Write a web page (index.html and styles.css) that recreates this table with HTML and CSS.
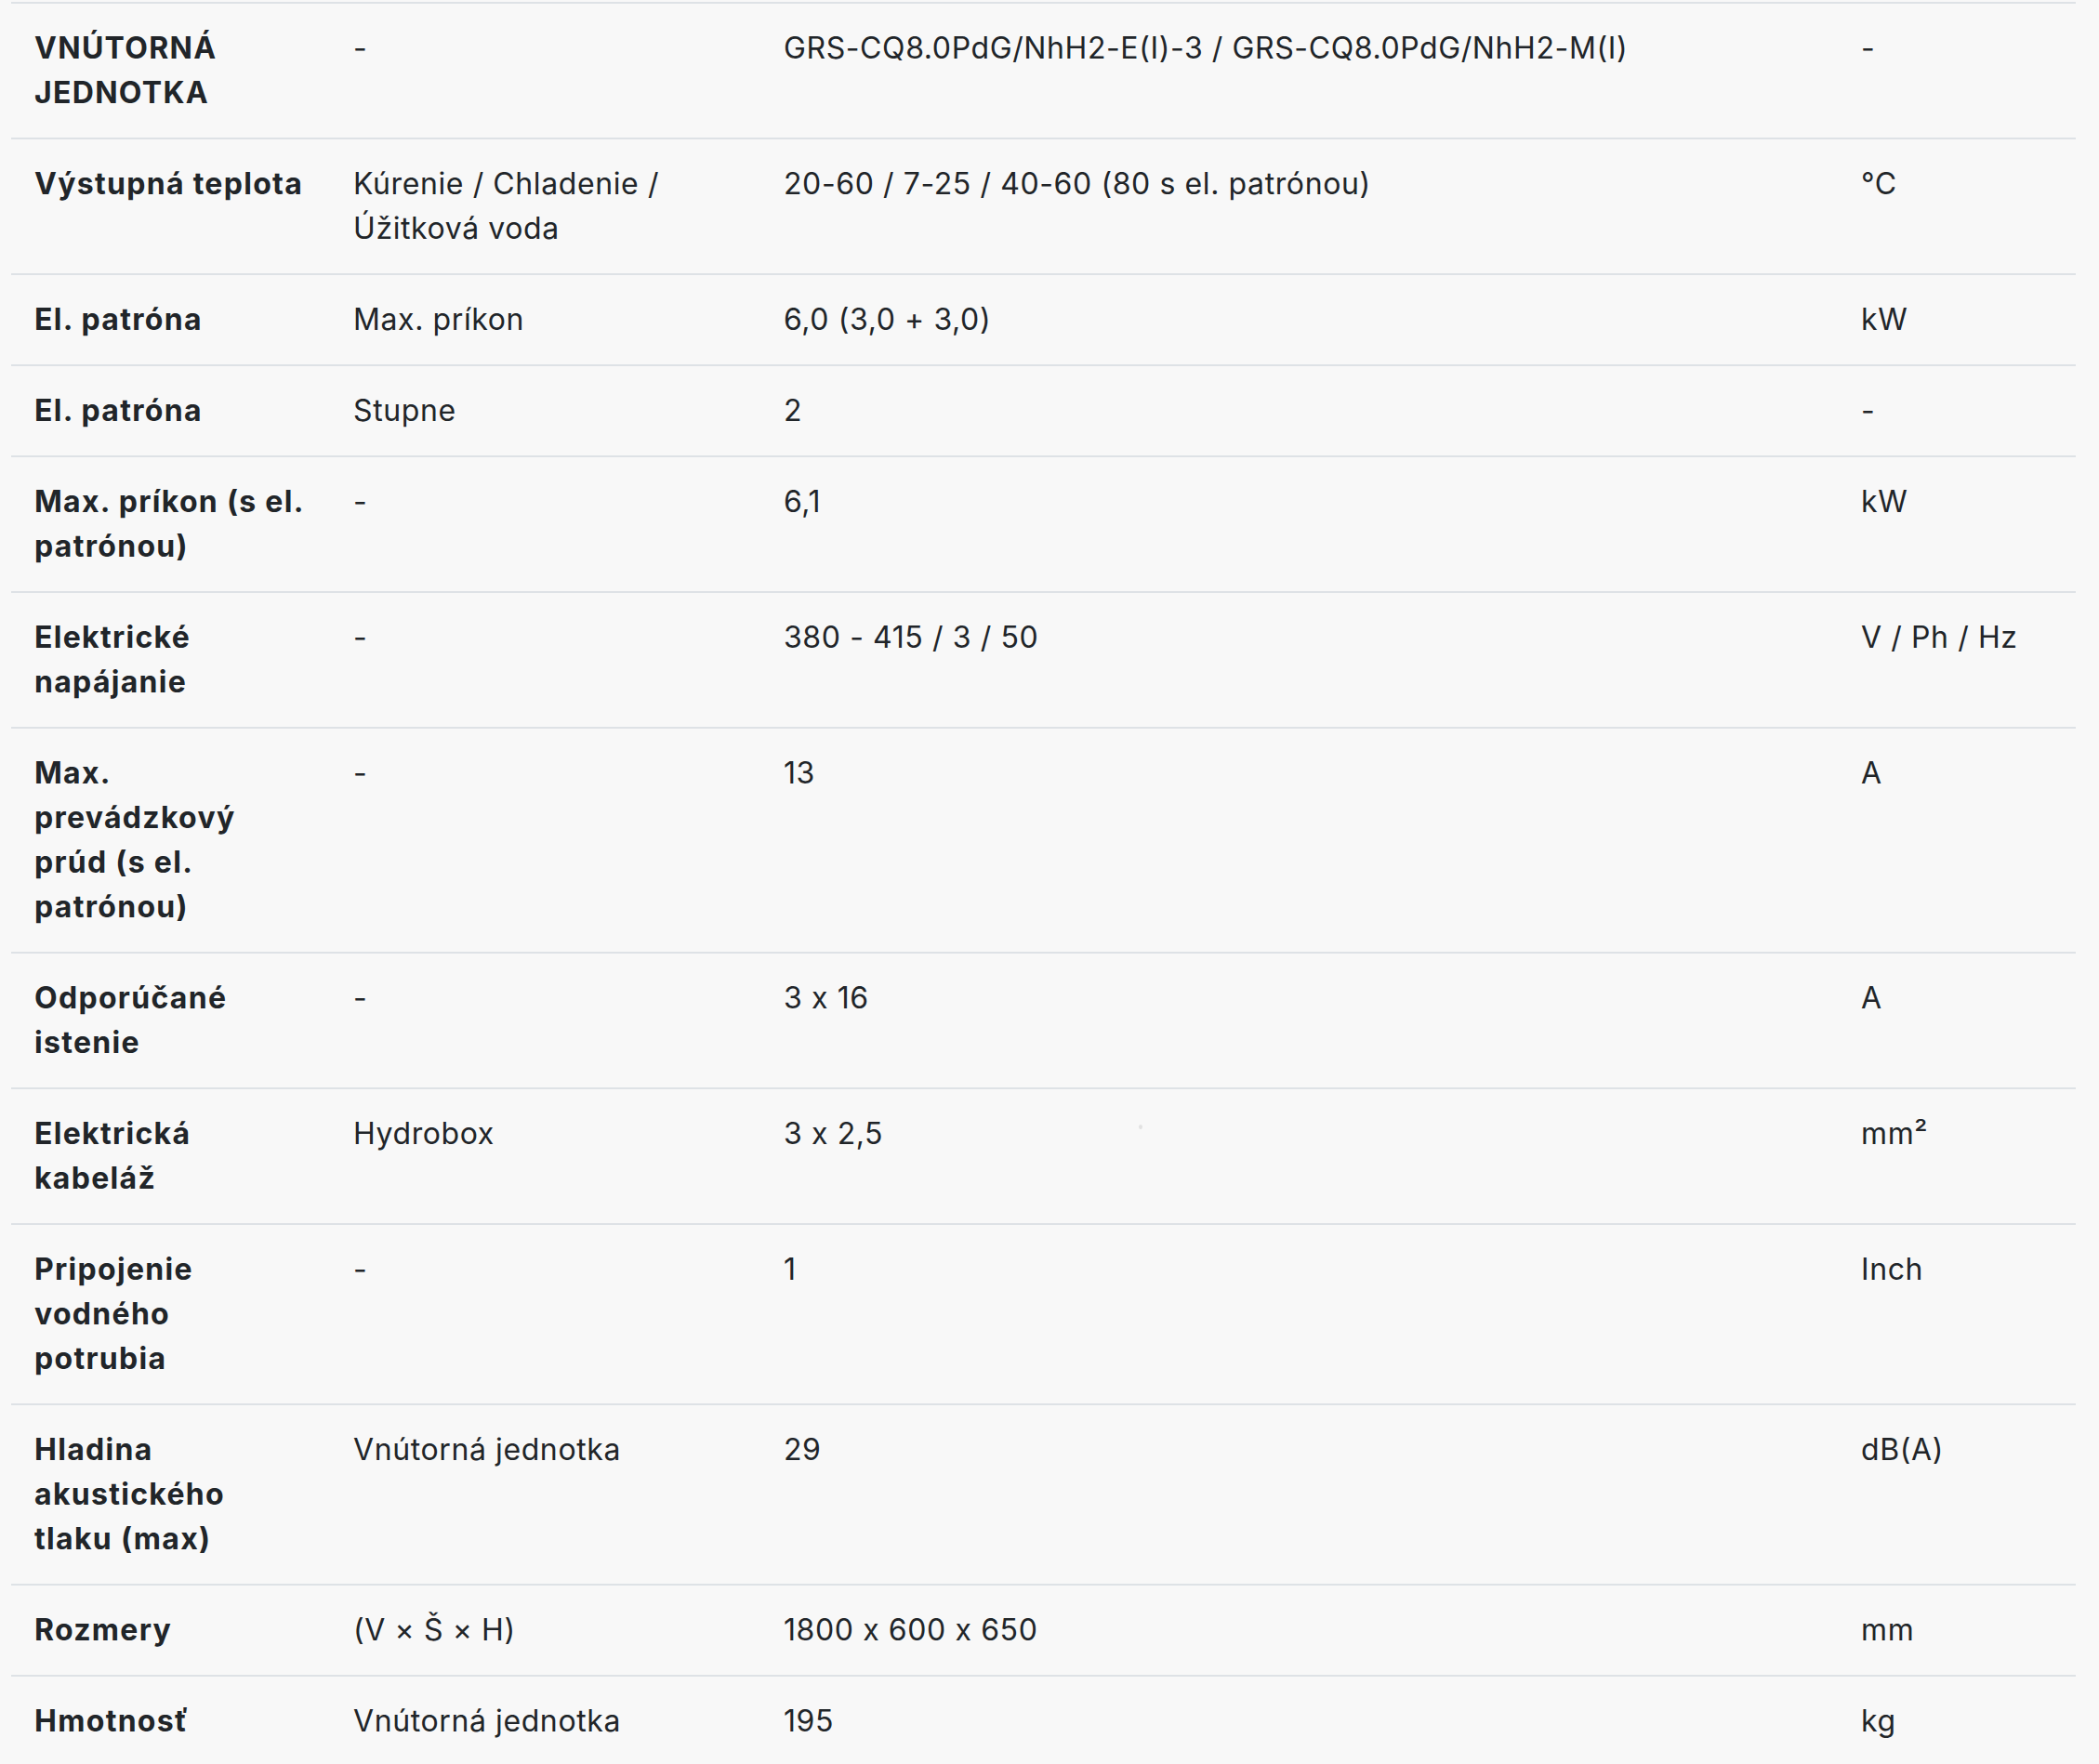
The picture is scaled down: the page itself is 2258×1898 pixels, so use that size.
FILE: index.html
```html
<!DOCTYPE html>
<html lang="sk">
<head>
<meta charset="utf-8">
<title>Technické parametre</title>
<link rel="stylesheet" href="styles.css">
</head>
<body>
<div class="wrap">
<table class="spec">
<colgroup>
<col class="c1"><col class="c2"><col class="c3"><col class="c4">
</colgroup>
<tbody>
<tr><th>VNÚTORNÁ JEDNOTKA</th><td>-</td><td>GRS-CQ8.0PdG/NhH2-E(I)-3 / GRS-CQ8.0PdG/NhH2-M(I)</td><td>-</td></tr>
<tr><th>Výstupná teplota</th><td>Kúrenie / Chladenie / Úžitková voda</td><td>20-60 / 7-25 / 40-60 (80 s el. patrónou)</td><td>°C</td></tr>
<tr><th>El. patróna</th><td>Max. príkon</td><td>6,0 (3,0 + 3,0)</td><td>kW</td></tr>
<tr><th>El. patróna</th><td>Stupne</td><td>2</td><td>-</td></tr>
<tr><th>Max. príkon (s el. patrónou)</th><td>-</td><td>6,1</td><td>kW</td></tr>
<tr><th>Elektrické napájanie</th><td>-</td><td>380 - 415 / 3 / 50</td><td>V / Ph / Hz</td></tr>
<tr><th>Max. prevádzkový prúd (s el. patrónou)</th><td>-</td><td>13</td><td>A</td></tr>
<tr><th>Odporúčané istenie</th><td>-</td><td>3 x 16</td><td>A</td></tr>
<tr><th>Elektrická kabeláž</th><td>Hydrobox</td><td class="dotcell">3 x 2,5<span class="dot"></span></td><td>mm²</td></tr>
<tr><th>Pripojenie vodného potrubia</th><td>-</td><td>1</td><td>Inch</td></tr>
<tr><th>Hladina akustického tlaku (max)</th><td>Vnútorná jednotka</td><td>29</td><td>dB(A)</td></tr>
<tr><th>Rozmery</th><td>(V × Š × H)</td><td>1800 x 600 x 650</td><td>mm</td></tr>
<tr><th>Hmotnosť</th><td>Vnútorná jednotka</td><td>195</td><td>kg</td></tr>
</tbody>
</table>
</div>
</body>
</html>
```

FILE: styles.css
```css
html, body {
  margin: 0;
  padding: 0;
  background: #f8f8f8;
}
.wrap {
  padding: 2px 0 0 12px;
}
.spec {
  width: 2221px;
  border-collapse: collapse;
  table-layout: fixed;
  font-family: Inter, "Noto Sans", sans-serif;
  font-size: 32px;
  line-height: 48px;
  color: #212529;
  font-feature-settings: "calt" 0;
}
.c1 { width: 343px; }
.c2 { width: 463px; }
.c3 { width: 1159px; }
.c4 { width: 256px; }
.spec tr {
  border-top: 2px solid #dee2e6;
}
.spec th,
.spec td {
  padding: 24px 25px;
  text-align: left;
  vertical-align: top;
}
.spec th {
  font-weight: 700;
  letter-spacing: 1.3px;
}
.spec td {
  font-weight: 400;
  letter-spacing: 0.6px;
}
.dotcell {
  position: relative;
}
.dot {
  position: absolute;
  left: 407px;
  top: 38px;
  width: 4px;
  height: 5px;
  border-radius: 50%;
  background: #e2e2e2;
}
```
